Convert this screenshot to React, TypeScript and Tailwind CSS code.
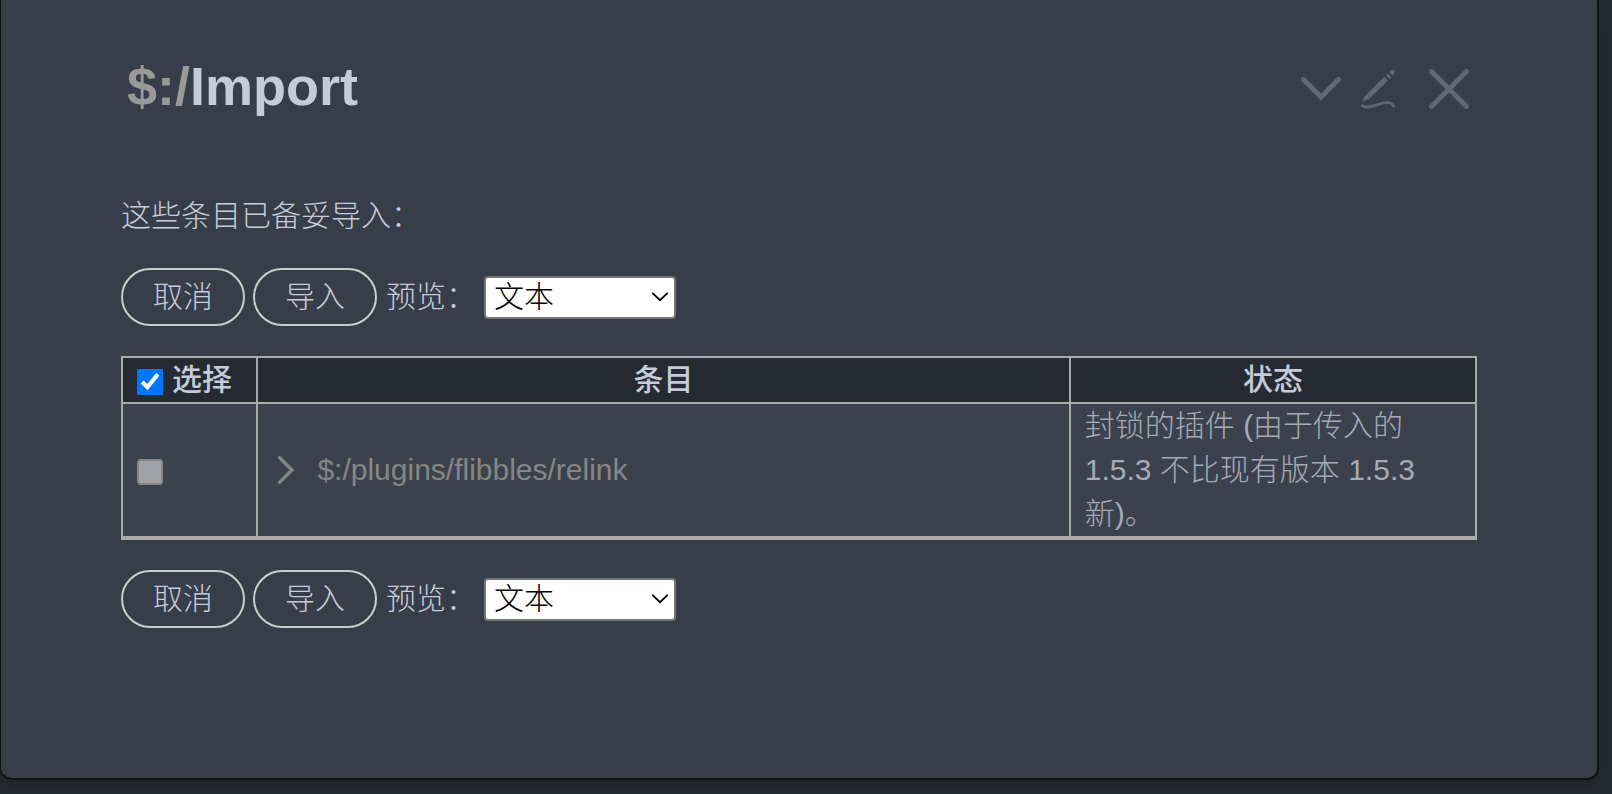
import { useState } from 'react'

const PREVIEW_TYPES = ['文本', '字段', '差异']

const tiddlers = [
  {
    title: '$:/plugins/flibbles/relink',
    status: '封锁的插件 (由于传入的 1.5.3 不比现有版本 1.5.3 新)。',
    blocked: true,
  },
]

function ChevronDownIcon() {
  return (
    <svg className="w-10 h-10" viewBox="0 0 40 40" fill="none" stroke="currentColor" strokeWidth="5" strokeLinecap="round" aria-hidden="true">
      <path d="M2.500 10.500 L20 28 L37.500 10.500" strokeLinejoin="miter" />
    </svg>
  )
}

function EditIcon() {
  return (
    <svg className="w-[34px] h-10" viewBox="0 0 34 40" aria-hidden="true">
      <g fill="currentColor">
        <path d="M23.300 7.800 L26.900 11.400 L8 30.100 Q5 31.500 1.200 32.600 Q2 29 4.200 26.900 Z" />
        <path d="M24.800 6.200 L26.500 4.500 L30.200 8.200 L28.500 9.900 Z" />
        <path d="M28 3 Q30.500 0.300 32.900 0.800 Q34.500 3.300 31.800 6.800 Z" />
      </g>
      <path d="M1.300 36.700 C8 41.500 20 32.300 27.500 33.600 Q31 34.300 32.600 37.300" fill="none" stroke="currentColor" strokeWidth="2.600" strokeLinecap="round" />
    </svg>
  )
}

function CloseIcon() {
  return (
    <svg className="w-10 h-10" viewBox="0 0 40 40" fill="none" stroke="currentColor" strokeWidth="4.800" strokeLinecap="round" aria-hidden="true">
      <path d="M2.500 2.500 L37.500 37.500 M37.500 2.500 L2.500 37.500" />
    </svg>
  )
}

function ImportControls({ id, preview, onPreviewChange }: { id: string; preview: string; onPreviewChange: (value: string) => void }) {
  return (
    <div className="flex flex-wrap items-center gap-2">
      <button type="button" className="h-[58px] px-[30px] border-2 border-[#cccccc] rounded-full">
        取消
      </button>
      <button type="button" className="h-[58px] px-[30px] border-2 border-[#cccccc] rounded-full">
        导入
      </button>
      <label htmlFor={id} className="pl-px">预览：</label>
      <div className="relative">
        <select
          id={id}
          value={preview}
          onChange={(e) => onPreviewChange(e.target.value)}
          className="block appearance-none w-48 h-[43px] pl-2 border-2 border-[#767676] rounded-sm bg-white text-black leading-9"
        >
          {PREVIEW_TYPES.map((type) => (
            <option key={type}>{type}</option>
          ))}
        </select>
        <svg className="absolute right-2 top-4 w-4 h-3 text-black pointer-events-none" viewBox="0 0 16 12" fill="none" stroke="currentColor" strokeWidth="1.800" aria-hidden="true">
          <path d="M0.300 0.800 L8 8.200 L15.700 0.800" />
        </svg>
      </div>
    </div>
  )
}

export default function App() {
  const [preview, setPreview] = useState('文本')
  const [allSelected, setAllSelected] = useState(true)

  return (
    <div className="min-h-screen bg-[#252931] font-['Liberation_Sans','Noto_Sans_CJK_SC',sans-serif] font-light text-[30px] leading-[44px] text-[#c5cbd8]">
      <main className="mr-[13px] px-[120px] pt-[46px] pb-[150px] bg-[#383e49] border-l border-r-2 border-b-2 border-[#111111] rounded-b-xl shadow-lg">
        <header className="flex items-center justify-between mb-[68px] pl-1.5 pr-2">
          <h1 className="text-[54px] leading-[80px] font-bold">
            <span className="text-[#999999]">$:/</span>Import
          </h1>
          <div className="flex items-center pt-1.5 text-[#626773]">
            <button type="button" aria-label="更多" className="mr-5">
              <ChevronDownIcon />
            </button>
            <button type="button" aria-label="编辑" className="mr-[34px]">
              <EditIcon />
            </button>
            <button type="button" aria-label="关闭">
              <CloseIcon />
            </button>
          </div>
        </header>

        <div className="flex flex-col gap-[30px]">
          <p>这些条目已备妥导入：</p>

          <ImportControls id="preview-top" preview={preview} onPreviewChange={setPreview} />

          <table className="w-full table-fixed border-collapse border-2 border-b-4 border-[#aaaaaa]">
            <thead className="bg-[#262a32]">
              <tr>
                <th className="w-1/10 p-0 pl-3.5 border-2 border-[#aaaaaa] font-medium text-left">
                  <label className="flex items-center gap-[9px]">
                    <input
                      type="checkbox"
                      checked={allSelected}
                      onChange={(e) => setAllSelected(e.target.checked)}
                      className="w-[26px] h-[26px] mt-1 shrink-0 accent-[#0075ff]"
                    />
                    选择
                  </label>
                </th>
                <th className="w-6/10 p-0 border-2 border-[#aaaaaa] font-medium">条目</th>
                <th className="w-3/10 p-0 border-2 border-[#aaaaaa] font-medium">状态</th>
              </tr>
            </thead>
            <tbody className="bg-[#3c424d]">
              {tiddlers.map((tiddler) => (
                <tr key={tiddler.title}>
                  <td className="p-0 pl-3.5 border-2 border-b-4 border-[#aaaaaa]">
                    <input
                      type="checkbox"
                      disabled={tiddler.blocked}
                      aria-label={tiddler.title}
                      className="block appearance-none w-[26px] h-[26px] mt-1 border-2 border-[#85878c] rounded bg-[#a2a3a8]"
                    />
                  </td>
                  <td className="p-0 pl-5 border-2 border-b-4 border-[#aaaaaa]">
                    <button type="button" className="flex items-center gap-[23px] text-[#868686]">
                      <svg className="w-4 h-7" viewBox="0 0 16 28" fill="none" stroke="currentColor" strokeWidth="3.200" strokeLinecap="round" aria-hidden="true">
                        <path d="M1.600 1.600 L14 14 L1.600 26.400" />
                      </svg>
                      {tiddler.title}
                    </button>
                  </td>
                  <td className="p-0 px-3.5 border-2 border-b-4 border-[#aaaaaa] text-[#a5aab6]">{tiddler.status}</td>
                </tr>
              ))}
            </tbody>
          </table>

          <ImportControls id="preview-bottom" preview={preview} onPreviewChange={setPreview} />
        </div>
      </main>
    </div>
  )
}
